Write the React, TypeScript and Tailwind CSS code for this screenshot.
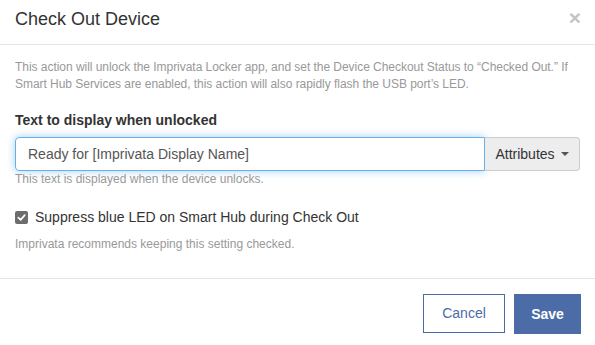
import { FC } from 'react'

const CheckedBox: FC = () => (
  <span className="flex h-[13px] w-[13px] shrink-0 items-center justify-center rounded-[2px] bg-[#6d6d6d]">
    <svg width="9" height="9" viewBox="0 0 10 10" fill="none">
      <path
        d="M1.5 5.2 L4 7.6 L8.6 2.4"
        stroke="white"
        strokeWidth="1.9"
        strokeLinecap="round"
        strokeLinejoin="round"
      />
    </svg>
  </span>
)

const App: FC = () => {
  return (
    <div className="h-[345px] w-[595px] overflow-hidden bg-white font-['Liberation_Sans',Arial,sans-serif] text-[#333]">
      {/* header */}
      <div className="flex h-[45px] items-start justify-between border-b border-[#e5e5e5] pl-[15px] pr-[14px] pt-[7px]">
        <h4 className="text-[18px] leading-[25px]">Check Out Device</h4>
        <button className="mt-[-1px] text-[21px] leading-[24px] font-bold text-[#c4c4c4]">×</button>
      </div>

      {/* body */}
      <div className="px-[15px] pb-[25px] pt-[14px]">
        <p className="text-[12px] leading-[17px] tracking-[-0.04px] text-[#999]">
          This action will unlock the Imprivata Locker app, and set the Device Checkout Status to “Checked Out.” If
          <br />
          Smart Hub Services are enabled, this action will also rapidly flash the USB port’s LED.
        </p>

        <label className="mt-[18px] block text-[14px] leading-[18px] font-bold">Text to display when unlocked</label>

        <div className="mt-[8px] flex h-[34px]">
          <input
            className="min-w-0 flex-1 rounded-l-[4px] border border-[#66afe9] px-[12px] text-[14px] text-[#555] shadow-[0_0_8px_rgba(102,175,233,0.6)] outline-none"
            defaultValue="Ready for [Imprivata Display Name]"
          />
          <button className="flex w-[95px] items-center justify-center gap-[6px] rounded-r-[4px] border border-l-0 border-[#ccc] bg-[#ededed] text-[14px] text-[#333]">
            Attributes
            <span className="h-0 w-0 border-x-[4px] border-t-[4px] border-x-transparent border-t-[#555]" />
          </button>
        </div>
        <p className="text-[12px] leading-[17px] text-[#999]">This text is displayed when the device unlocks.</p>

        <div className="mt-[19px] flex h-[20px] items-center gap-[7px]">
          <CheckedBox />
          <span className="text-[14px] leading-[20px]">Suppress blue LED on Smart Hub during Check Out</span>
        </div>
        <p className="mt-[9px] text-[12px] leading-[17px] text-[#999]">Imprivata recommends keeping this setting checked.</p>
      </div>

      {/* footer */}
      <div className="flex justify-end gap-[9px] border-t border-[#e5e5e5] pr-[14px] pt-[15px]">
        <button className="h-[39px] w-[82px] border border-[#4b6ca7] bg-white text-[14px] text-[#4b6ca7]">Cancel</button>
        <button className="h-[40px] w-[67px] bg-[#4b6ca7] text-[14px] font-bold text-white">Save</button>
      </div>
    </div>
  )
}

export default App
